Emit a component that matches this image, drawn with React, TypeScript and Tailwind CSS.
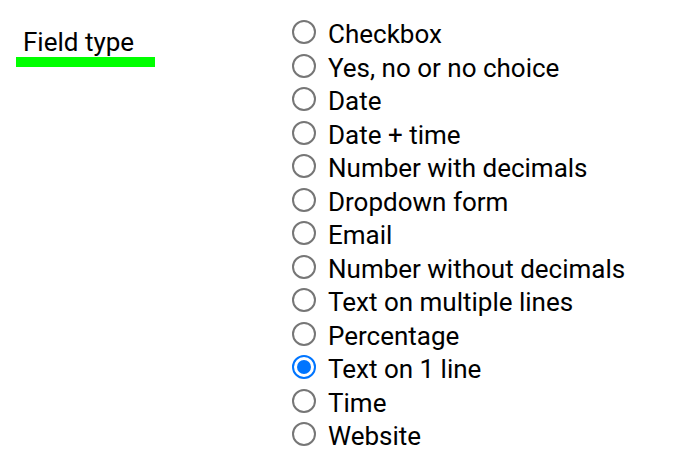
const options = [
  'Checkbox',
  'Yes, no or no choice',
  'Date',
  'Date + time',
  'Number with decimals',
  'Dropdown form',
  'Email',
  'Number without decimals',
  'Text on multiple lines',
  'Percentage',
  'Text on 1 line',
  'Time',
  'Website',
];

const selected = 'Text on 1 line';

const App = () => {
  return (
    <div className="w-[688px] h-[462px] bg-white flex font-['Roboto',sans-serif] text-black">
      {/* Label */}
      <div className="w-[292px] pt-[27px] pl-4 shrink-0">
        <div className="w-[139px]">
          <div className="pl-[7px] text-[26px] leading-[30px]">Field type</div>
          <div className="h-[10px] bg-[#00ff00]" />
        </div>
      </div>

      {/* Options */}
      <div className="flex flex-col pt-[18px]">
        {options.map((opt) => (
          <label key={opt} className="flex items-center h-[33.5px] gap-[12px] text-[26px]">
            {opt === selected ? (
              <span className="w-6 h-6 mb-[5px] rounded-full border-2 border-[#0075ff] flex items-center justify-center">
                <span className="w-[14px] h-[14px] rounded-full bg-[#0075ff]" />
              </span>
            ) : (
              <span className="w-6 h-6 mb-[5px] rounded-full border-2 border-[#767676]" />
            )}
            <span>{opt}</span>
          </label>
        ))}
      </div>
    </div>
  );
};

export default App;
